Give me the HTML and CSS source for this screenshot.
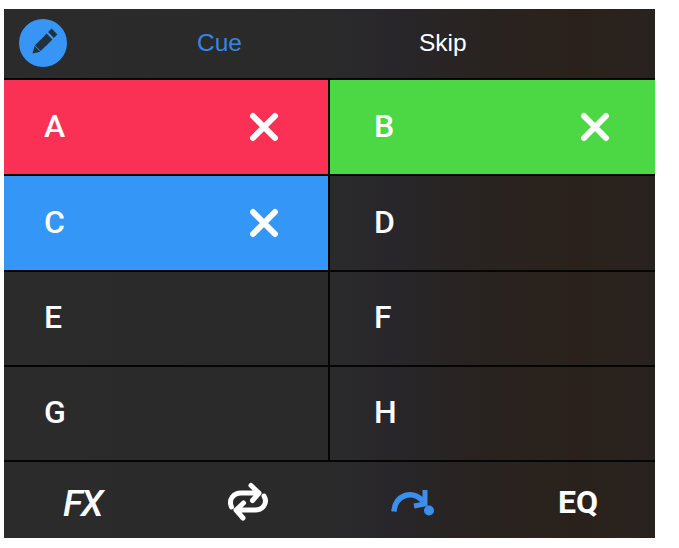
FILE: index.html
```html
<!DOCTYPE html>
<html lang="en">
<head>
<meta charset="utf-8">
<title>Pads</title>
<link rel="stylesheet" href="styles.css">
</head>
<body>
<main class="app">
  <header class="top">
    <button class="edit" aria-label="Edit">
      <svg viewBox="0 0 48 48" width="48" height="48"><path class="pen" d="M13.500 34.500L15.600 27l5.800 5.800zM15.900 26.300l5.800-5.800 5.800 5.800-5.800 5.800zM21.500 21l6.100-6.400 5.800 5.800-6.100 6.400zM29.100 13.100l3.500-3.500 5.800 5.800-3.500 3.500z"/></svg>
    </button>
    <div class="tab tab-cue">Cue</div>
    <div class="tab tab-skip">Skip</div>
  </header>
  <section class="pads">
    <div class="pad red"><span class="label">A</span><svg class="x" viewBox="0 0 30 30"><path d="M4 4l22 22M26 4L4 26"/></svg></div>
    <div class="pad green"><span class="label">B</span><svg class="x" viewBox="0 0 30 30"><path d="M4 4l22 22M26 4L4 26"/></svg></div>
    <div class="pad blue"><span class="label">C</span><svg class="x" viewBox="0 0 30 30"><path d="M4 4l22 22M26 4L4 26"/></svg></div>
    <div class="pad"><span class="label">D</span></div>
    <div class="pad"><span class="label">E</span></div>
    <div class="pad"><span class="label">F</span></div>
    <div class="pad"><span class="label">G</span></div>
    <div class="pad"><span class="label">H</span></div>
  </section>
  <footer class="bottom">
    <div class="fx">FX</div>
    <svg class="loop" viewBox="0 0 41 40"><path d="M4.500 25C1 17 7 11 14 11H31M24 3.500L32 11 25.500 18.500M37 14C41 21 36 28 28 28H10M16.500 21L9 28l7 8"/></svg>
    <svg class="jump" viewBox="0 0 46 30"><path class="arc" d="M4 24.500C5 9 21 2 33 14"/><path class="head" d="M35 3V17L24 19"/><circle class="dot" cx="39" cy="23.500" r="5"/></svg>
    <div class="eq">EQ</div>
  </footer>
</main>
</body>
</html>
```
FILE: styles.css
```css
* { box-sizing: border-box; }
html, body { height: 100%; }
body {
  margin: 0;
  padding: 9px 24px 10px 4px;
  background: #fff;
  font-family: Roboto, "Liberation Sans", sans-serif;
  color: #fff;
}
.app {
  height: 529px;
  display: grid;
  grid-template-rows: 71px 382px 76px;
  background: linear-gradient(90deg, #2b2b2c 0%, #2a2a2b 50%, #28262a 60%, #29231f 75%, #2a211c 88%, #28221e 100%);
}
.top {
  display: flex;
  align-items: center;
  border-bottom: 2px solid #050505;
  padding: 0 0 2px 15px;
}
.edit {
  width: 48px;
  height: 48px;
  padding: 0;
  border: 0;
  border-radius: 50%;
  background: #3796f5;
  display: block;
  flex: none;
}
.edit svg { display: block; }
.pen { fill: #23313f; }
.tab { font-family: "Liberation Sans", Arial, sans-serif; font-size: 24.500px; line-height: 28px; }
.tab-cue { color: #3388e6; margin-left: 130px; }
.tab-skip { color: #fff; margin-left: 177px; }
.pads {
  display: grid;
  grid-template-columns: 326px 1fr;
  grid-template-rows: 96px 96px 95px 95px;
  min-height: 0;
}
.pad {
  display: flex;
  align-items: center;
  justify-content: space-between;
  padding: 0 49px 0 40px;
  border-bottom: 2px solid #050505;
}
.pad:nth-child(odd) { border-right: 2px solid #050505; }
.pad:nth-child(even) { padding-left: 44px; padding-right: 45px; }
.red { background: #fb3055; }
.green { background: #4cd844; }
.blue { background: #3496f7; }
.label { font-size: 32px; font-weight: 500; line-height: 34px; margin-bottom: 3px; }
.x { width: 30px; height: 30px; fill: none; stroke: #fff; stroke-width: 6px; stroke-linecap: round; }
.bottom {
  display: flex;
  align-items: center;
  justify-content: space-between;
  padding: 4px 57px 0 59px;
}
.fx { font-size: 37px; font-weight: 500; font-style: italic; letter-spacing: -2px; line-height: 40px; margin-top: 3px; }
.eq { font-size: 32px; font-weight: 700; line-height: 40px; }
.loop { width: 41px; height: 40px; margin-left: 3px; fill: none; stroke: #fff; stroke-width: 5px; stroke-linecap: round; stroke-linejoin: round; }
.jump { width: 46px; height: 30px; fill: none; }
.arc { stroke: #3a90ec; stroke-width: 5.500px; }
.head { stroke: #3a90ec; stroke-width: 5px; }
.dot { fill: #3a90ec; }
```
